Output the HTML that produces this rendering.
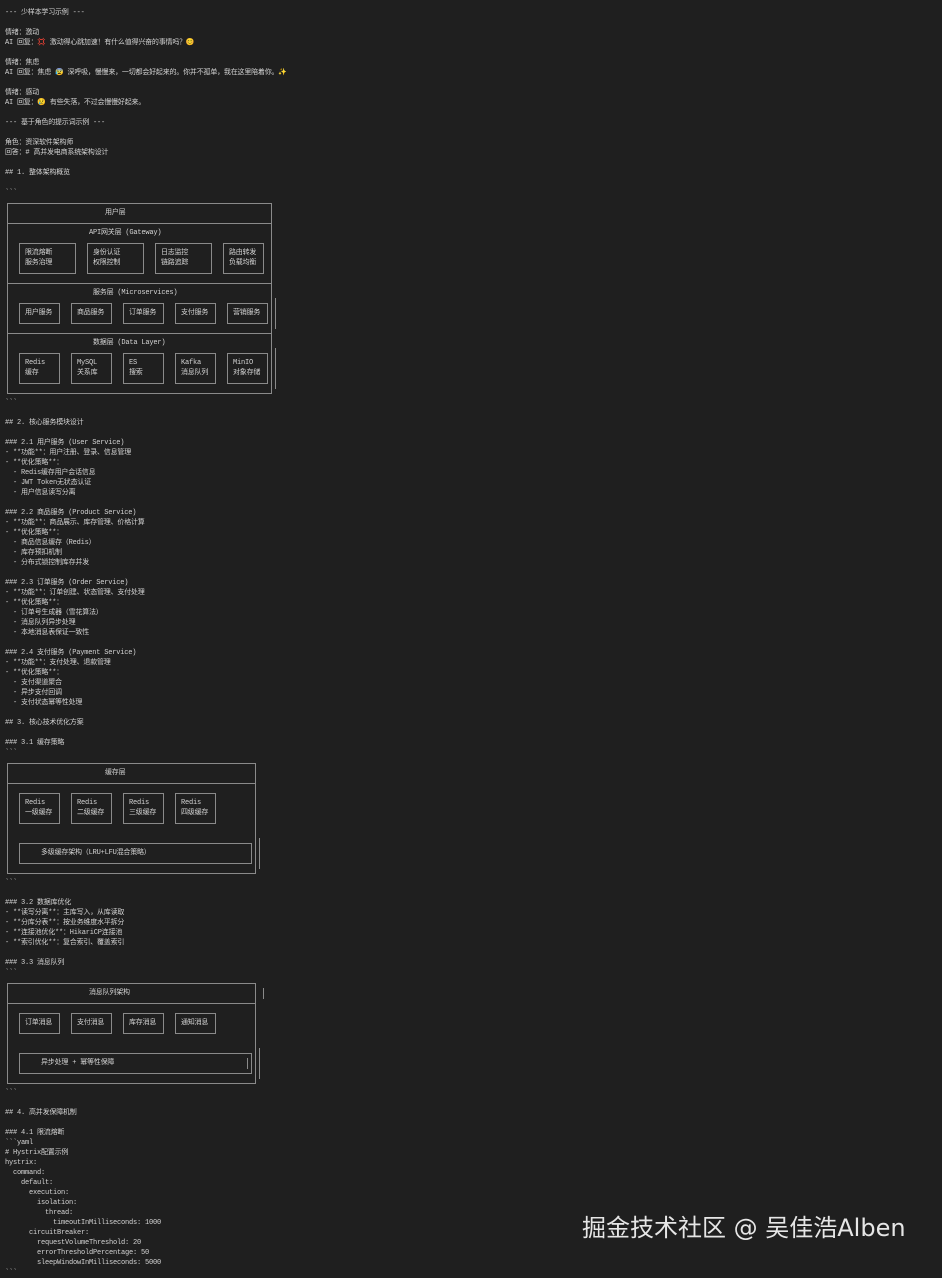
<!DOCTYPE html>
<html><head><meta charset="utf-8"><style>
body{margin:0;width:942px;height:1273px;background:#1f1f1f;overflow:hidden;position:relative;font-family:"Liberation Mono","Noto Sans CJK SC",monospace;color:#d4d4d4}
pre{position:absolute;left:5px;top:8px;margin:0;font:7px/10px "Liberation Mono","Noto Sans CJK SC",monospace;color:#d4d4d4;letter-spacing:-0.2px}
.b{position:absolute;border:1px solid #8a8a8a;box-sizing:border-box}
.h{position:absolute;height:0;border-top:1px solid #8a8a8a}
.v{position:absolute;width:0;border-left:1px solid #8a8a8a}
.t{position:absolute;font:7px/10px "Liberation Mono","Noto Sans CJK SC",monospace;color:#d4d4d4;white-space:pre;letter-spacing:-0.2px}
.wm{position:absolute;left:582px;top:1213px;font:24px/30px "DejaVu Sans","Noto Sans CJK SC",sans-serif;color:#e6e6e6;white-space:nowrap}
</style></head><body>
<pre>--- 少样本学习示例 ---

情绪：激动
AI 回复：💢 激动得心跳加速！有什么值得兴奋的事情吗？😊

情绪：焦虑
AI 回复：焦虑 😰 深呼吸，慢慢来，一切都会好起来的。你并不孤单，我在这里陪着你。✨

情绪：感动
AI 回复：😢 有些失落，不过会慢慢好起来。

--- 基于角色的提示词示例 ---

角色：资深软件架构师
回答：# 高并发电商系统架构设计

## 1. 整体架构概览

&#96;&#96;&#96;




















&#96;&#96;&#96;

## 2. 核心服务模块设计

### 2.1 用户服务 (User Service)
- **功能**：用户注册、登录、信息管理
- **优化策略**：
  - Redis缓存用户会话信息
  - JWT Token无状态认证
  - 用户信息读写分离

### 2.2 商品服务 (Product Service)
- **功能**：商品展示、库存管理、价格计算
- **优化策略**：
  - 商品信息缓存（Redis）
  - 库存预扣机制
  - 分布式锁控制库存并发

### 2.3 订单服务 (Order Service)
- **功能**：订单创建、状态管理、支付处理
- **优化策略**：
  - 订单号生成器（雪花算法）
  - 消息队列异步处理
  - 本地消息表保证一致性

### 2.4 支付服务 (Payment Service)
- **功能**：支付处理、退款管理
- **优化策略**：
  - 支付渠道聚合
  - 异步支付回调
  - 支付状态幂等性处理

## 3. 核心技术优化方案

### 3.1 缓存策略
&#96;&#96;&#96;












&#96;&#96;&#96;

### 3.2 数据库优化
- **读写分离**：主库写入，从库读取
- **分库分表**：按业务维度水平拆分
- **连接池优化**：HikariCP连接池
- **索引优化**：复合索引、覆盖索引

### 3.3 消息队列
&#96;&#96;&#96;











&#96;&#96;&#96;

## 4. 高并发保障机制

### 4.1 限流熔断
&#96;&#96;&#96;yaml
# Hystrix配置示例
hystrix:
  command:
    default:
      execution:
        isolation:
          thread:
            timeoutInMilliseconds: 1000
      circuitBreaker:
        requestVolumeThreshold: 20
        errorThresholdPercentage: 50
        sleepWindowInMilliseconds: 5000
&#96;&#96;&#96;</pre>

<div class="b" style="left:7px;top:203px;width:265px;height:191px"></div>
<div class="t" style="left:105px;top:208px">用户层</div>
<div class="h" style="left:7px;top:223px;width:265px"></div>
<div class="t" style="left:89px;top:228px">API网关层 (Gateway)</div>
<div class="b" style="left:19px;top:243px;width:57px;height:31px"></div>
<div class="t" style="left:25px;top:248px">限流熔断
服务治理</div>
<div class="b" style="left:87px;top:243px;width:57px;height:31px"></div>
<div class="t" style="left:93px;top:248px">身份认证
权限控制</div>
<div class="b" style="left:155px;top:243px;width:57px;height:31px"></div>
<div class="t" style="left:161px;top:248px">日志监控
链路追踪</div>
<div class="b" style="left:223px;top:243px;width:41px;height:31px"></div>
<div class="t" style="left:229px;top:248px">路由转发
负载均衡</div>
<div class="h" style="left:7px;top:283px;width:265px"></div>
<div class="t" style="left:93px;top:288px">服务层 (Microservices)</div>
<div class="b" style="left:19px;top:303px;width:41px;height:21px"></div>
<div class="t" style="left:25px;top:308px">用户服务</div>
<div class="b" style="left:71px;top:303px;width:41px;height:21px"></div>
<div class="t" style="left:77px;top:308px">商品服务</div>
<div class="b" style="left:123px;top:303px;width:41px;height:21px"></div>
<div class="t" style="left:129px;top:308px">订单服务</div>
<div class="b" style="left:175px;top:303px;width:41px;height:21px"></div>
<div class="t" style="left:181px;top:308px">支付服务</div>
<div class="b" style="left:227px;top:303px;width:41px;height:21px"></div>
<div class="t" style="left:233px;top:308px">营销服务</div>
<div class="v" style="left:275px;top:298px;height:31px"></div>
<div class="h" style="left:7px;top:333px;width:265px"></div>
<div class="t" style="left:93px;top:338px">数据层 (Data Layer)</div>
<div class="b" style="left:19px;top:353px;width:41px;height:31px"></div>
<div class="t" style="left:25px;top:358px">Redis
缓存</div>
<div class="b" style="left:71px;top:353px;width:41px;height:31px"></div>
<div class="t" style="left:77px;top:358px">MySQL
关系库</div>
<div class="b" style="left:123px;top:353px;width:41px;height:31px"></div>
<div class="t" style="left:129px;top:358px">ES
搜索</div>
<div class="b" style="left:175px;top:353px;width:41px;height:31px"></div>
<div class="t" style="left:181px;top:358px">Kafka
消息队列</div>
<div class="b" style="left:227px;top:353px;width:41px;height:31px"></div>
<div class="t" style="left:233px;top:358px">MinIO
对象存储</div>
<div class="v" style="left:275px;top:348px;height:41px"></div>

<div class="b" style="left:7px;top:763px;width:249px;height:111px"></div>
<div class="t" style="left:105px;top:768px">缓存层</div>
<div class="h" style="left:7px;top:783px;width:249px"></div>
<div class="b" style="left:19px;top:793px;width:41px;height:31px"></div>
<div class="t" style="left:25px;top:798px">Redis
一级缓存</div>
<div class="b" style="left:71px;top:793px;width:41px;height:31px"></div>
<div class="t" style="left:77px;top:798px">Redis
二级缓存</div>
<div class="b" style="left:123px;top:793px;width:41px;height:31px"></div>
<div class="t" style="left:129px;top:798px">Redis
三级缓存</div>
<div class="b" style="left:175px;top:793px;width:41px;height:31px"></div>
<div class="t" style="left:181px;top:798px">Redis
四级缓存</div>
<div class="b" style="left:19px;top:843px;width:233px;height:21px"></div>
<div class="t" style="left:41px;top:848px">多级缓存架构（LRU+LFU混合策略）</div>
<div class="v" style="left:259px;top:838px;height:31px"></div>

<div class="b" style="left:7px;top:983px;width:249px;height:101px"></div>
<div class="t" style="left:89px;top:988px">消息队列架构</div>
<div class="v" style="left:263px;top:988px;height:11px"></div>
<div class="h" style="left:7px;top:1003px;width:249px"></div>
<div class="b" style="left:19px;top:1013px;width:41px;height:21px"></div>
<div class="t" style="left:25px;top:1018px">订单消息</div>
<div class="b" style="left:71px;top:1013px;width:41px;height:21px"></div>
<div class="t" style="left:77px;top:1018px">支付消息</div>
<div class="b" style="left:123px;top:1013px;width:41px;height:21px"></div>
<div class="t" style="left:129px;top:1018px">库存消息</div>
<div class="b" style="left:175px;top:1013px;width:41px;height:21px"></div>
<div class="t" style="left:181px;top:1018px">通知消息</div>
<div class="b" style="left:19px;top:1053px;width:233px;height:21px"></div>
<div class="t" style="left:41px;top:1058px">异步处理 + 幂等性保障</div>
<div class="v" style="left:247px;top:1058px;height:11px"></div>
<div class="v" style="left:259px;top:1048px;height:31px"></div>

<div class="wm">掘金技术社区 @ 吴佳浩Alben</div>
</body></html>
